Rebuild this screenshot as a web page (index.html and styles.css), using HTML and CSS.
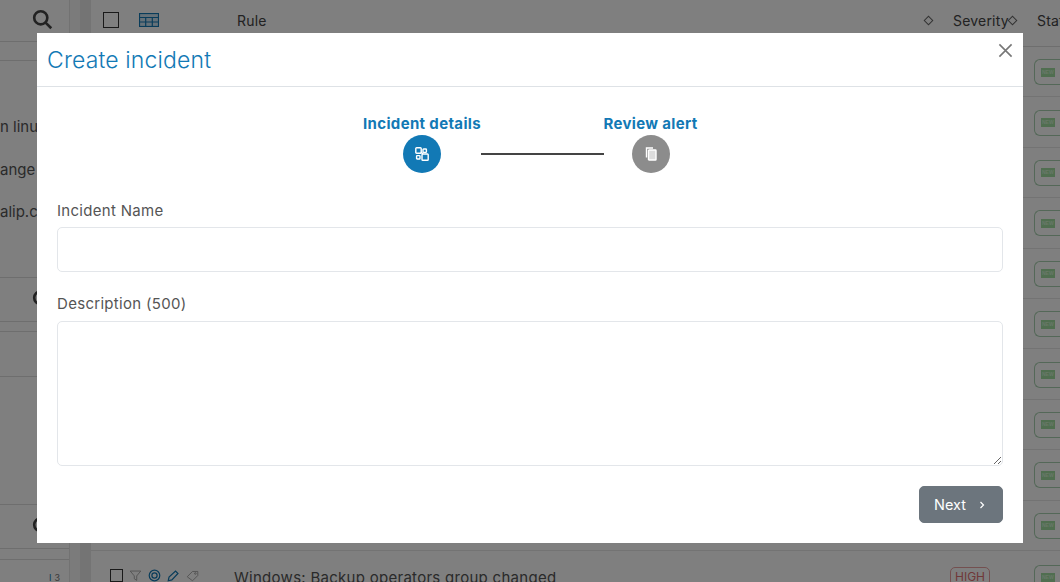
FILE: index.html
```html
<!DOCTYPE html>
<html lang="en">
<head>
<meta charset="utf-8">
<title>Create incident</title>
<link rel="stylesheet" href="styles.css">
</head>
<body>
<div class="page">
  <aside class="side">
    <div class="side-search"><svg class="mag" viewBox="0 0 24 24"><circle cx="10" cy="10" r="7.5"/><path d="M15.5 15.5L22 22"/></svg></div>
    <div class="side-blank s1"></div>
    <div class="side-list">
      <div class="side-text">n linux</div>
      <div class="side-text">ange</div>
      <div class="side-text">alip.c.</div>
    </div>
    <div class="side-search s2"><svg class="mag" viewBox="0 0 24 24"><circle cx="10" cy="10" r="7.5"/><path d="M15.5 15.5L22 22"/></svg></div>
    <div class="side-blank s3"></div>
    <div class="side-blank s4"></div>
    <div class="side-blank s5"></div>
    <div class="side-search s2"><svg class="mag" viewBox="0 0 24 24"><circle cx="10" cy="10" r="7.5"/><path d="M15.5 15.5L22 22"/></svg></div>
    <div class="side-foot"><span class="foot-mark">I</span><span class="foot-num">3</span></div>
  </aside>
  <div class="gutter"></div>
  <main class="main">
    <div class="thead">
      <span class="check"></span>
      <svg class="tbl-ico" viewBox="0 0 20 14"><rect x=".5" y=".5" width="19" height="13"/><path d="M0 4.5H20M0 9H20M6.7 4.5V14M13.3 4.5V14"/></svg>
      <span class="th-rule">Rule</span>
      <span class="diamond"></span>
      <span class="th-sev">Severity</span>
      <span class="diamond"></span>
      <span class="th-sta">Status</span>
    </div>
    <div class="row"><span class="badge"><i>NEW</i></span></div>
    <div class="row"><span class="badge"><i>NEW</i></span></div>
    <div class="row"><span class="badge"><i>NEW</i></span></div>
    <div class="row"><span class="badge"><i>NEW</i></span></div>
    <div class="row"><span class="badge"><i>NEW</i></span></div>
    <div class="row"><span class="badge"><i>NEW</i></span></div>
    <div class="row"><span class="badge"><i>NEW</i></span></div>
    <div class="row"><span class="badge"><i>NEW</i></span></div>
    <div class="row"><span class="badge"><i>NEW</i></span></div>
    <div class="row"><span class="badge"><i>NEW</i></span></div>
    <div class="row last">
      <div class="acts">
        <span class="check small"></span>
        <svg class="act" viewBox="0 0 16 16"><path d="M1.5 2.5H14.5L9.5 8.5V14L6.5 12V8.5Z"/></svg>
        <svg class="act blue" viewBox="0 0 16 16"><circle cx="8" cy="8" r="6.5"/><circle cx="8" cy="8" r="3.2"/></svg>
        <svg class="act blue" viewBox="0 0 16 16"><path d="M1.5 14.5L2.5 10L10.5 2.5L13.5 5.5L6 13.5Z"/></svg>
        <svg class="act" viewBox="0 0 16 16"><path d="M1.5 9.5L8 3H14.5V8L8 14.5Z"/><circle cx="11.5" cy="5.5" r="1"/></svg>
      </div>
      <span class="rule-name">Windows: Backup operators group changed</span>
      <span class="sev">HIGH</span>
      <span class="badge"><i>NEW</i></span>
    </div>
  </main>
</div>

<div class="overlay"></div>

<section class="modal">
  <header class="modal-head">
    <h1 class="modal-title">Create incident</h1>
    <svg class="close" viewBox="0 0 16 16"><path d="M1.5 1.5L14.5 14.5M14.5 1.5L1.5 14.5"/></svg>
  </header>
  <div class="modal-body">
    <div class="stepper">
      <div class="step s-one">
        <span class="step-label">Incident details</span>
        <span class="step-dot active">
          <svg class="step-ico" viewBox="0 0 14 14"><rect x=".8" y=".8" width="5.4" height="5.4" rx=".8"/><rect x="8" y="2" width="3.4" height="3.4" rx=".6"/><rect x="1.6" y="8.6" width="3.4" height="3.4" rx=".6"/><rect x="7" y="7" width="6.2" height="6.2" rx=".8"/><path d="M6 5L8 7"/></svg>
        </span>
      </div>
      <span class="step-line"></span>
      <div class="step s-two">
        <span class="step-label">Review alert</span>
        <span class="step-dot">
          <svg class="step-ico" viewBox="0 0 14 14"><path d="M9 1H2.5V10.5"/><rect x="4.5" y="3" width="7.5" height="10" rx=".6" class="solid"/></svg>
        </span>
      </div>
    </div>
    <label class="field-label" for="iname">Incident Name</label>
    <input class="input" id="iname" type="text">
    <label class="field-label second" for="idesc">Description (500)</label>
    <textarea class="textarea" id="idesc"></textarea>
    <div class="actions">
      <button class="next" type="button">Next <svg class="chev" viewBox="0 0 8 10"><path d="M2.5 2L5.5 5L2.5 8"/></svg></button>
    </div>
  </div>
</section>
</body>
</html>
```
FILE: styles.css
```css
* { box-sizing: border-box; }
html, body { margin: 0; height: 582px; overflow: hidden; }
body { font-family: "Inter", "Open Sans", sans-serif; background: #fff; position: relative; color: #555; }

.page { display: flex; height: 582px; background: #f4f4f4; width: 1060px; overflow: hidden; }
.side { width: 70px; flex: none; background: #fff; border-right: 1px solid #e4e4e4; overflow: hidden; display: flex; flex-direction: column; }
.gutter { width: 20px; flex: none; background: linear-gradient(90deg, #f6f6f6 0 50%, #e8e8e8 50%); }
.side-search { height: 42px; flex: none; display: flex; justify-content: flex-end; align-items: flex-start; padding: 9px 16px 0 0; border-bottom: 1px solid #ddd; }
.mag { width: 21px; height: 21px; fill: none; stroke: #444; stroke-width: 3; flex: none; }
.side-blank { flex: none; border-bottom: 1px solid #ddd; }
.s1 { height: 19px; }
.side-list { height: 217px; padding-top: 45px; border-bottom: 1px solid #ddd; flex: none; white-space: nowrap; }
.side-text { font-size: 15px; height: 42.5px; line-height: 42px; color: #555; }
.s2 { height: 44px; padding-top: 11px; }
.s3 { height: 10px; }
.s4 { height: 45px; }
.s5 { height: 128px; }
.side-foot { margin-top: 10px; border-top: 1px solid #ddd; padding: 12px 9px 0 0; display: flex; justify-content: flex-end; gap: 3px; font-size: 9px; line-height: 11px; color: #1279b5; }
.foot-num { color: #777; }

.main { flex: 1; background: #fff; min-width: 0; overflow: hidden; border-left: 1px solid #e8e8e8; }
.thead { height: 47px; display: flex; align-items: flex-start; padding: 12px 0 0 12px; border-bottom: 1px solid #ddd; font-size: 14px; color: #444; white-space: nowrap; }
.check { width: 16px; height: 16px; border: 1px solid #333; flex: none; background: #fff; }
.tbl-ico { width: 20px; height: 14px; margin: 1px 0 0 20px; fill: none; stroke: #1279b5; stroke-width: 1.2; flex: none; background: #cde3f0; }
.th-rule { margin-left: 78px; width: 688px; letter-spacing: .2px; flex: none; }
.diamond { width: 7px; height: 7px; border: 1px solid #666; transform: rotate(45deg); flex: none; margin-top: 5px; }
.th-sev { margin-left: 21px; width: 56px; letter-spacing: .2px; flex: none; }
.th-sta { margin-left: 21px; letter-spacing: .2px; flex: none; }

.row { height: 50.4px; border-bottom: 1px solid #e6e6e6; display: flex; align-items: center; justify-content: flex-end; padding-top: 1px; }
.badge { width: 36px; height: 26px; border: 1px solid #a8d0b0; border-right: 0; border-radius: 6px 0 0 6px; display: flex; align-items: center; padding-left: 6px; flex: none; margin-right: -10px; background: #fff; }
.badge i { display: block; background: #a0dca0; color: #d0f0d0; font: 700 5px/9px "Liberation Sans", sans-serif; padding: 0 1px; }
.last { justify-content: flex-start; padding: 15px 0 0 19px; border-bottom: 0; height: 60px; align-items: flex-start; }
.acts { display: flex; align-items: center; gap: 6px; margin-top: 3px; flex: none; }
.check.small { width: 13px; height: 13px; }
.act { width: 13px; height: 13px; fill: none; stroke: #999; stroke-width: 1; }
.act.blue { stroke: #1279b5; stroke-width: 1.5; }
.rule-name { font-size: 15px; letter-spacing: .28px; line-height: 20px; margin: 2px 0 0 35px; width: 716px; color: #555; white-space: nowrap; flex: none; }
.sev { font-size: 12px; border: 1px solid #e8a0a0; border-radius: 5px; padding: 0 4px; height: 19px; line-height: 18px; color: #e07070; width: 40px; text-align: center; flex: none; margin-top: 1px; }
.last .badge { margin-left: 44px; margin-top: -1px; }

.overlay { position: absolute; inset: 0; background: rgba(0, 0, 0, .5); }

.modal { position: absolute; left: 37px; top: 33px; width: 986px; height: 510px; background: #fff; display: flex; flex-direction: column; }
.modal-head { height: 54px; flex: none; border-bottom: 1px solid #dee2e6; padding: 10px 10px 0; display: flex; justify-content: space-between; align-items: flex-start; }
.modal-title { margin: 1px 0 0; font: 300 23px/32px "Inter", sans-serif; color: #1279b5; letter-spacing: .15px; }
.close { width: 15px; height: 15px; fill: none; stroke: #777; stroke-width: 1.7; }

.modal-body { padding: 0 20px; display: flex; flex-direction: column; flex: 1; }
.stepper { display: flex; justify-content: center; height: 88px; margin-top: 26px; align-items: flex-start; }
.step { display: flex; flex-direction: column; align-items: center; flex: none; }
.s-one { width: 118px; }
.s-two { width: 93px; }
.step-label { font: 700 15px/21px "Inter", sans-serif; color: #1279b5; white-space: nowrap; letter-spacing: .35px; }
.step-dot { width: 38px; height: 38px; border-radius: 50%; background: #8c8c8c; display: flex; align-items: center; justify-content: center; margin-top: 1px; }
.step-dot.active { background: #1279b5; }
.step-ico { width: 14px; height: 14px; fill: none; stroke: #fff; stroke-width: 1.4; }
.step-ico .solid { fill: #ddd; stroke: #fff; }
.step-line { width: 123px; height: 2px; background: #444; margin-top: 40px; flex: none; }

.field-label { font-size: 15px; letter-spacing: .3px; line-height: 20px; color: #555; display: block; height: 26px; }
.field-label.second { margin-top: 22px; height: 27px; }
.input { width: 946px; height: 45px; border: 1px solid #e3e6ea; border-radius: 5px; background: #fff; display: block; }
.textarea { width: 946px; height: 145px; border: 1px solid #e3e6ea; border-radius: 5px; background: #fff; display: block; }
.actions { display: flex; justify-content: flex-end; margin-top: 20px; }
.next { width: 84px; height: 37px; background: #6c757d; border: 1px solid #6c757d; border-radius: 5px; color: #fff; font: 400 14.5px "Inter", sans-serif; display: flex; align-items: center; justify-content: flex-start; padding: 0 0 0 14px; gap: 12px; }
.chev { width: 8px; height: 10px; fill: none; stroke: #fff; stroke-width: 1.2; }
```
